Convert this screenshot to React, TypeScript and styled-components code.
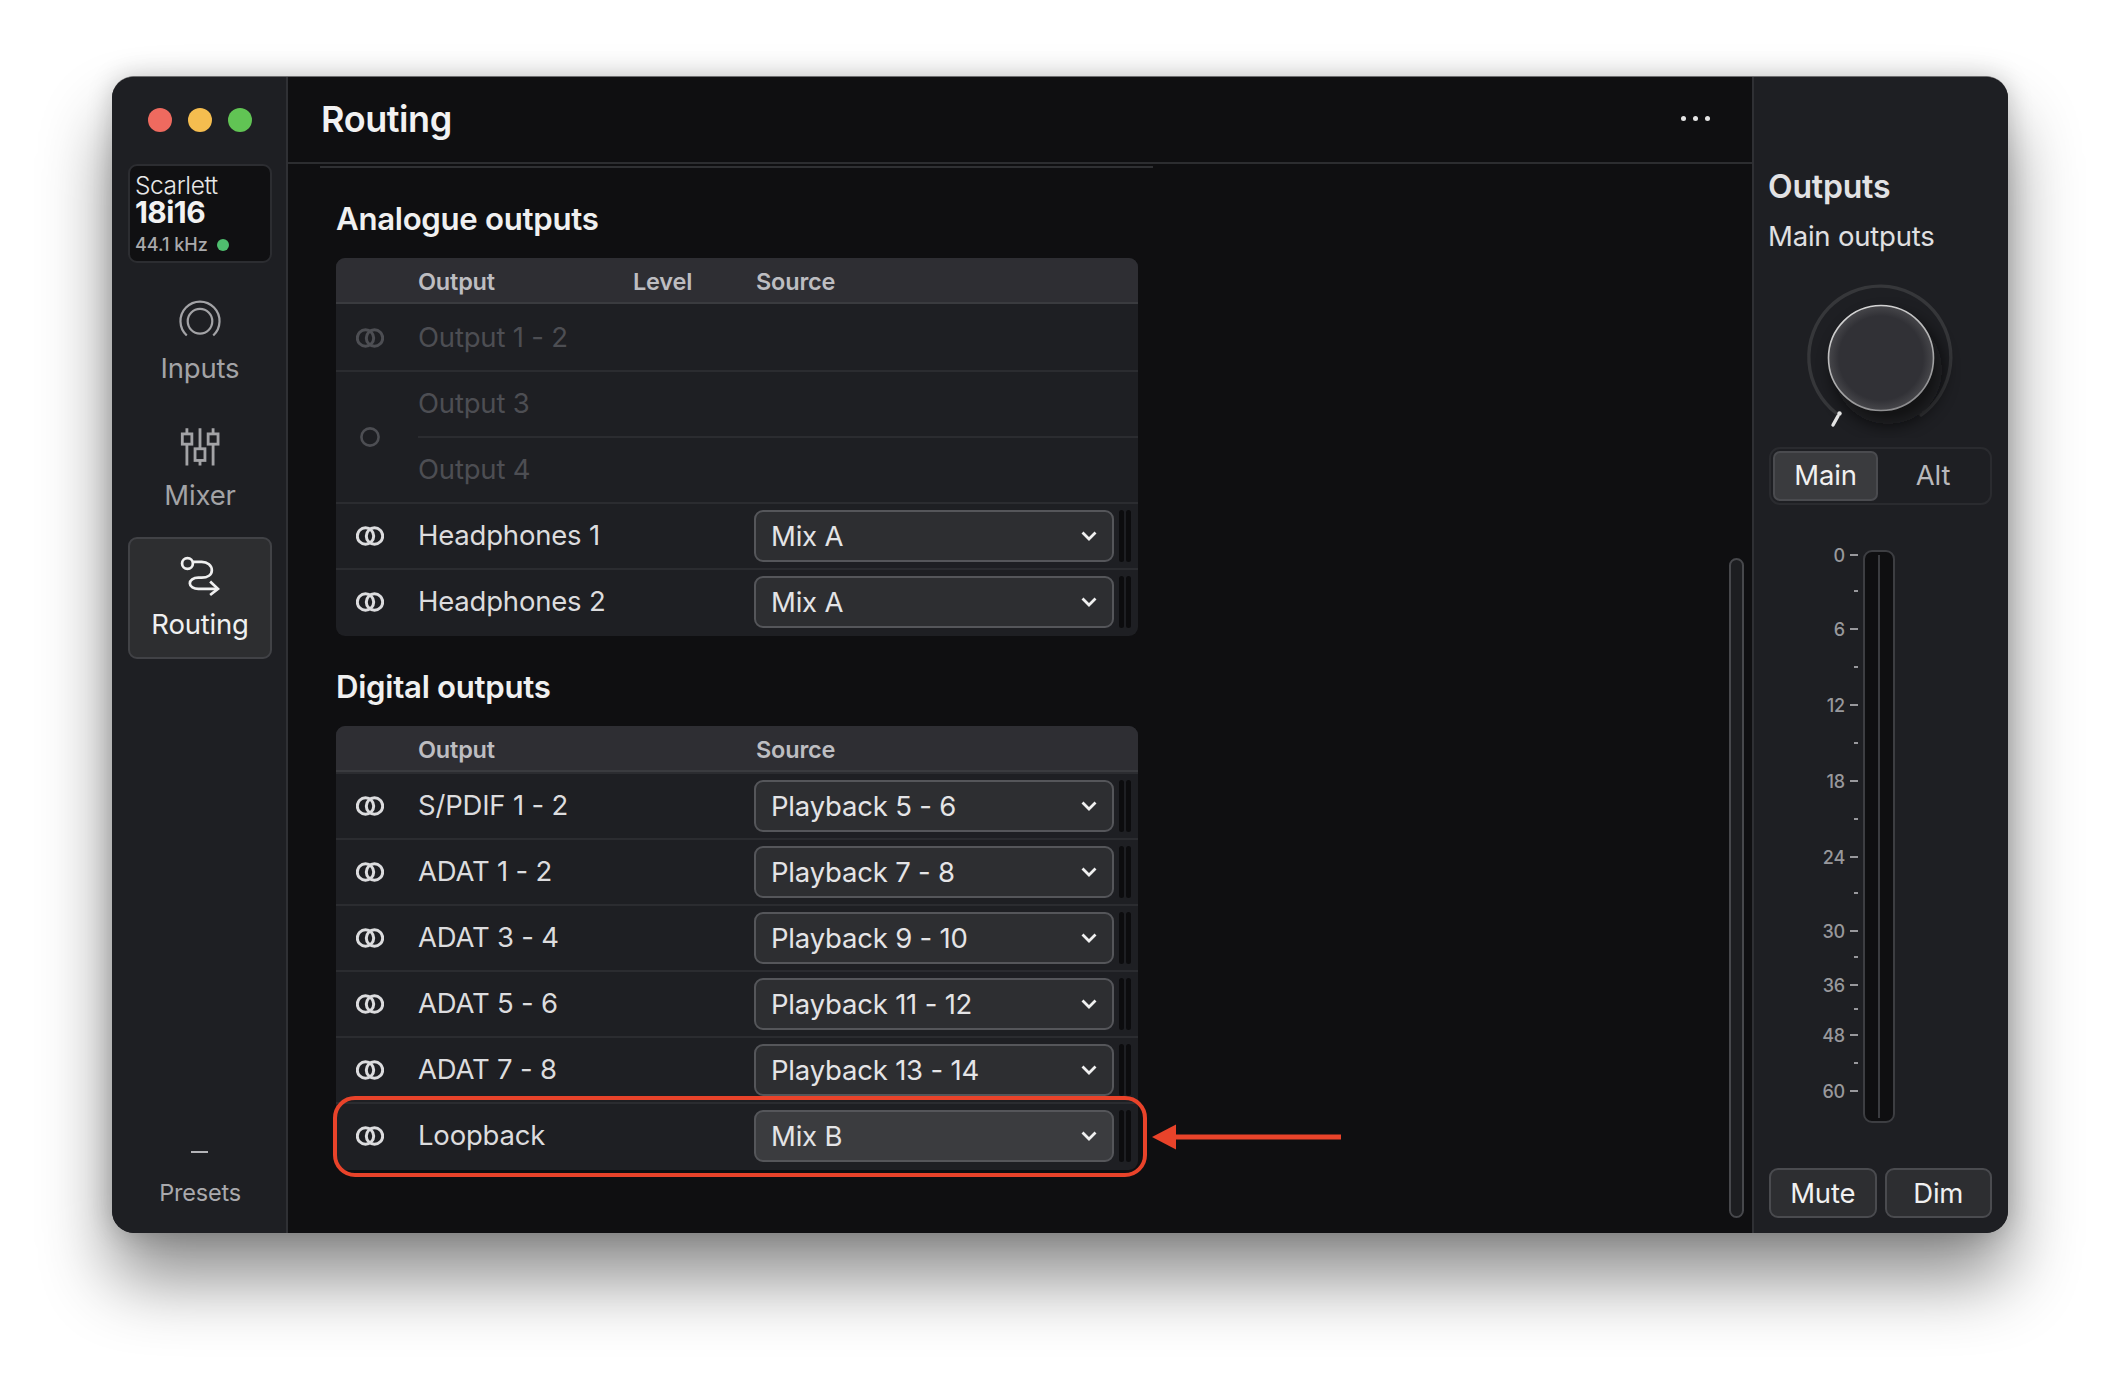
import React from 'react';
import styled, { createGlobalStyle } from 'styled-components';

const GlobalStyle = createGlobalStyle`
  html, body {
    margin: 0;
    padding: 0;
    background: #fff;
  }
  * {
    box-sizing: border-box;
  }
`;

const FONT = `Inter, "Noto Sans", sans-serif`;

const Page = styled.div`
  width: 2120px;
  height: 1382px;
  padding: 76px 112px 149px;
  overflow: hidden;
  font-family: ${FONT};
  letter-spacing: -0.2px;
`;

const Window = styled.div`
  display: flex;
  height: 100%;
  border-radius: 22px;
  overflow: hidden;
  background: #0f0f11;
  border-top: 1px solid #6e6e70;
`;

const Shadow = styled.div`
  height: 100%;
  border-radius: 22px;
  box-shadow: 0 46px 70px rgba(0, 0, 0, 0.45), 0 0 26px rgba(0, 0, 0, 0.2);
`;

const Sidebar = styled.aside`
  width: 176px;
  flex: none;
  display: flex;
  flex-direction: column;
  align-items: center;
  padding: 31px 0 0 2px;
  background: #1e1f23;
  border-right: 2px solid #2f3034;
`;

const Lights = styled.div`
  display: flex;
  gap: 16px;
`;

const Light = styled.span<{ $color: string }>`
  width: 24px;
  height: 24px;
  border-radius: 50%;
  background: ${({ $color }) => $color};
`;

const Device = styled.div`
  width: 144px;
  height: 99px;
  margin-top: 32px;
  padding: 6px 5px;
  border: 2px solid #2c2d31;
  border-radius: 9px;
  background: #101012;
  color: #e8e8e8;
`;

const DeviceName = styled.div`
  font-size: 24.5px;
  line-height: 27px;
  font-weight: 300;
  letter-spacing: -0.4px;
`;

const DeviceModel = styled.div`
  font-size: 30px;
  line-height: 27px;
  font-weight: 700;
  letter-spacing: -0.6px;
  color: #f2f2f2;
`;

const Rate = styled.div`
  display: flex;
  align-items: center;
  gap: 9px;
  margin-top: 8px;
  font-size: 18px;
  line-height: 22px;
  font-weight: 500;
  letter-spacing: 0;
  color: #a9a9ac;
`;

const RateDot = styled.span`
  width: 12px;
  height: 12px;
  border-radius: 50%;
  background: #4fbf6f;
`;

const Nav = styled.nav`
  display: flex;
  flex-direction: column;
  gap: 7px;
  margin-top: 16px;
`;

const NavItem = styled.div<{ $active?: boolean }>`
  width: 144px;
  height: 122px;
  padding-top: 14px;
  display: flex;
  flex-direction: column;
  align-items: center;
  border-radius: 9px;
  border: 2px solid ${({ $active }) => ($active ? '#414246' : 'transparent')};
  background: ${({ $active }) => ($active ? '#2d2e30' : 'transparent')};
  color: ${({ $active }) => ($active ? '#f0f0f0' : '#a3a3a6')};
`;

const NavIcon = styled.svg`
  width: 46px;
  height: 46px;
  fill: none;
  stroke: currentColor;
`;

const NavLabel = styled.div`
  margin-top: 7px;
  font-size: 27.5px;
  line-height: 36px;
  font-weight: 400;
`;

const Presets = styled.div`
  margin-top: auto;
  padding-bottom: 24px;
  display: flex;
  flex-direction: column;
  align-items: center;
  color: #a9a9ad;
`;

const PresetDash = styled.span`
  width: 17px;
  height: 2px;
  margin-bottom: 24px;
  background: #b4b4b8;
`;

const PresetLabel = styled.div`
  font-size: 23.5px;
  line-height: 32px;
`;

const Main = styled.main`
  flex: 1;
  min-width: 0;
  display: flex;
  flex-direction: column;
  position: relative;
`;

const Header = styled.header`
  height: 87px;
  flex: none;
  display: flex;
  align-items: center;
  justify-content: space-between;
  padding: 0 42px 2px 33px;
  border-bottom: 2px solid #2c2d30;
`;

const Title = styled.h1`
  margin: 0;
  font-size: 36px;
  font-weight: 600;
  color: #f2f2f2;
  letter-spacing: -0.4px;
`;

const More = styled.div`
  display: flex;
  gap: 7px;
`;

const MoreDot = styled.span`
  width: 5px;
  height: 5px;
  border-radius: 50%;
  background: #e4e4e4;
`;

const Content = styled.div`
  flex: 1;
  padding-left: 48px;
`;

const ScrolledLine = styled.div`
  width: 833px;
  height: 2px;
  margin: 2px 0 0 -16px;
  background: #2f3033;
`;

const SectionTitle = styled.h2`
  margin: 32px 0 0;
  height: 38px;
  font-size: 31.2px;
  line-height: 38px;
  font-weight: 600;
  color: #f0f0f0;
  letter-spacing: -0.3px;
`;

const Table = styled.div`
  width: 802px;
  margin-top: 20px;
  padding-bottom: 2px;
  border-radius: 9px;
  background: #1e1f23;
`;

const TableHead = styled.div`
  height: 46px;
  display: flex;
  align-items: center;
  padding: 2px 0 0 82px;
  border-radius: 9px 9px 0 0;
  background: #2e2e33;
  border-bottom: 2px solid #3a3b3f;
  font-size: 23.5px;
  font-weight: 600;
  color: #bdbdc1;
`;

const HeadCell = styled.div<{ $width: number }>`
  width: ${({ $width }) => $width}px;
`;

const Row = styled.div<{ $muted?: boolean; $first?: boolean }>`
  height: 66px;
  display: flex;
  align-items: center;
  position: relative;
  border-top: 2px solid ${({ $first }) => ($first ? 'transparent' : '#2b2c30')};
  color: ${({ $muted }) => ($muted ? '#4d4e53' : '#dcdcde')};
`;

const IconCell = styled.div`
  width: 82px;
  flex: none;
  display: flex;
  justify-content: center;
  padding-right: 14px;
`;

const RowName = styled.div`
  width: 336px;
  flex: none;
  padding-bottom: 2px;
  font-size: 27.5px;
  font-weight: 400;
`;

const Group = styled.div`
  display: flex;
  border-top: 2px solid #2b2c30;
  color: #4d4e53;
`;

const GroupIcon = styled(IconCell)`
  align-items: center;
`;

const GroupRows = styled.div`
  flex: 1;
`;

const GroupRow = styled.div<{ $split?: boolean }>`
  height: ${({ $split }) => ($split ? '66px' : '64px')};
  display: flex;
  align-items: center;
  border-top: ${({ $split }) => ($split ? '2px solid #2b2c30' : 'none')};
`;

const LinkIcon = styled.svg`
  width: 28px;
  height: 20px;
  fill: none;
  stroke: currentColor;
  stroke-width: 3;
`;

const MonoIcon = styled.svg`
  width: 20px;
  height: 20px;
  fill: none;
  stroke: currentColor;
  stroke-width: 2.6;
`;

const Select = styled.div<{ $hot?: boolean }>`
  width: 360px;
  height: 52px;
  flex: none;
  display: flex;
  align-items: center;
  justify-content: space-between;
  padding: 0 15px 1px;
  border: 2px solid #55565a;
  border-radius: 9px;
  background: ${({ $hot }) => ($hot ? '#3b3c3f' : '#2d2e31')};
  color: #e4e4e6;
  font-size: 27.5px;
`;

const Chevron = styled.svg`
  width: 16px;
  height: 10px;
  fill: none;
  stroke: #f0f0f0;
  stroke-width: 2.8;
`;

const LevelBars = styled.div`
  display: flex;
  gap: 2px;
  margin-left: 5px;
`;

const LevelBar = styled.span`
  width: 5px;
  height: 52px;
  border-radius: 3px;
  background: #0c0c0e;
`;

const Highlight = styled.div`
  position: absolute;
  left: -3px;
  top: -8px;
  width: 814px;
  height: 81px;
  border: 4.5px solid #e9432a;
  border-radius: 22px;
`;

const Annotation = styled.svg`
  position: absolute;
  left: 862px;
  top: 1046px;
  width: 192px;
  height: 28px;
`;

const ScrollBar = styled.div`
  position: absolute;
  right: 8px;
  top: 481px;
  width: 15px;
  height: 660px;
  border: 2px solid #47484c;
  border-radius: 8px;
  background: #1d1e21;
`;

const OutputsPanel = styled.aside`
  width: 256px;
  flex: none;
  display: flex;
  flex-direction: column;
  padding: 92px 16px 15px 15px;
  background: #1e1f23;
  border-left: 2px solid #2f3034;
`;

const PanelTitle = styled.div`
  margin-left: -1px;
  font-size: 32px;
  line-height: 36px;
  font-weight: 600;
  color: #e2e2e4;
`;

const PanelSub = styled.div`
  margin: 13px 0 0 -1px;
  font-size: 27.5px;
  line-height: 36px;
  color: #e0e0e2;
`;

const Knob = styled.svg`
  display: block;
  width: 160px;
  height: 160px;
  margin: 24px auto 0;
`;

const Toggle = styled.div`
  height: 58px;
  margin-top: 9px;
  display: flex;
  padding: 2px;
  border: 2px solid #2a2b2f;
  border-radius: 11px;
`;

const ToggleItem = styled.div<{ $active?: boolean }>`
  flex: 1;
  display: flex;
  align-items: center;
  justify-content: center;
  padding-bottom: 2px;
  border-radius: 7px;
  font-size: 27.5px;
  border: 2px solid ${({ $active }) => ($active ? '#4a4b4f' : 'transparent')};
  background: ${({ $active }) => ($active ? '#3a3b3e' : 'transparent')};
  color: ${({ $active }) => ($active ? '#f0f0f0' : '#b8b8bb')};
  max-width: ${({ $active }) => ($active ? '105px' : 'none')};
`;

const MeterArea = styled.div`
  margin-top: 45px;
  height: 573px;
  display: flex;
`;

const Scale = styled.div`
  margin: 5px 5px 0 0;
  width: 89px;
`;

const ScaleRow = styled.div<{ $h: number }>`
  height: ${({ $h }) => $h}px;
  display: flex;
  justify-content: flex-end;
  align-items: flex-start;
  gap: 5px;
`;

const ScaleLabel = styled.span`
  margin-top: -9px;
  font-size: 18px;
  line-height: 20px;
  font-weight: 500;
  color: #98989c;
`;

const ScaleMark = styled.span<{ $major: boolean }>`
  width: ${({ $major }) => ($major ? '8px' : '4px')};
  height: 2px;
  margin-top: -1px;
  background: #98989c;
`;

const Meter = styled.div`
  width: 32px;
  height: 573px;
  display: flex;
  justify-content: center;
  padding: 3px 0;
  border: 2px solid #3d3e42;
  border-radius: 9px;
  background: #0f0f11;
`;

const MeterLine = styled.span`
  width: 2px;
  background: #3b3c40;
`;

const Buttons = styled.div`
  display: flex;
  gap: 8px;
  margin-top: auto;
`;

const PanelButton = styled.div`
  flex: 1;
  height: 50px;
  display: flex;
  align-items: center;
  justify-content: center;
  border: 2px solid #4a4b4f;
  border-radius: 9px;
  background: #2d2e31;
  color: #f0f0f0;
  font-size: 27.5px;
`;

const TICKS: { y: number; label?: string }[] = [
  { y: 555, label: '0' },
  { y: 591 },
  { y: 629, label: '6' },
  { y: 667 },
  { y: 705, label: '12' },
  { y: 743 },
  { y: 781, label: '18' },
  { y: 819 },
  { y: 857, label: '24' },
  { y: 893 },
  { y: 931, label: '30' },
  { y: 957 },
  { y: 985, label: '36' },
  { y: 1009 },
  { y: 1035, label: '48' },
  { y: 1063 },
  { y: 1091, label: '60' },
];

const Link = () => (
  <LinkIcon viewBox="0 0 28 20">
    <circle cx="9.5" cy="10" r="8.2" />
    <circle cx="18.5" cy="10" r="8.2" />
  </LinkIcon>
);

const Down = () => (
  <Chevron viewBox="0 0 16 10">
    <path d="M1.5 1.5 8 8l6.5-6.5" />
  </Chevron>
);

const Output = ({ name, source, hot }: { name: string; source: string; hot?: boolean }) => (
  <Row>
    <IconCell>
      <Link />
    </IconCell>
    <RowName>{name}</RowName>
    <Select $hot={hot}>
      {source}
      <Down />
    </Select>
    <LevelBars>
      <LevelBar />
      <LevelBar />
    </LevelBars>
    {hot && <Highlight />}
  </Row>
);

export default function App() {
  return (
    <Page>
      <GlobalStyle />
      <Shadow>
        <Window>
          <Sidebar>
            <Lights>
              <Light $color="#ee6a5f" />
              <Light $color="#f5bd4f" />
              <Light $color="#61c454" />
            </Lights>
            <Device>
              <DeviceName>Scarlett</DeviceName>
              <DeviceModel>18i16</DeviceModel>
              <Rate>
                44.1 kHz
                <RateDot />
              </Rate>
            </Device>
            <Nav>
              <NavItem>
                <NavIcon viewBox="227 708 146 146" strokeWidth="7" style={{ marginTop: 2 }}>
                  <path d="M258 830A62 62 0 1 1 342 830" />
                  <circle cx="300" cy="785" r="39" />
                </NavIcon>
                <NavLabel>Inputs</NavLabel>
              </NavItem>
              <NavItem>
                <NavIcon viewBox="235 140 130 130" strokeWidth="8">
                  <path d="M263 152v16M263 197v60M300 152v56M300 243v14M337 152v16M337 197v60" />
                  <rect x="250" y="168" width="27" height="29" />
                  <rect x="286" y="210" width="28" height="33" />
                  <rect x="323" y="168" width="28" height="29" />
                </NavIcon>
                <NavLabel>Mixer</NavLabel>
              </NavItem>
              <NavItem $active>
                <NavIcon viewBox="232 522 136 130" strokeWidth="8">
                  <circle cx="263" cy="550" r="16" />
                  <path d="M280 545h25c17 0 30 11 30 25s-13 22-30 22h-10c-15 0-25 8-25 17s12 16 25 16h55" />
                  <path d="M330 603l23 22-23 18" />
                </NavIcon>
                <NavLabel>Routing</NavLabel>
              </NavItem>
            </Nav>
            <Presets>
              <PresetDash />
              <PresetLabel>Presets</PresetLabel>
            </Presets>
          </Sidebar>

          <Main>
            <Header>
              <Title>Routing</Title>
              <More>
                <MoreDot />
                <MoreDot />
                <MoreDot />
              </More>
            </Header>
            <Content>
              <ScrolledLine />
              <SectionTitle>Analogue outputs</SectionTitle>
              <Table>
                <TableHead>
                  <HeadCell $width={215}>Output</HeadCell>
                  <HeadCell $width={123}>Level</HeadCell>
                  <HeadCell $width={120}>Source</HeadCell>
                </TableHead>
                <Row $muted $first>
                  <IconCell>
                    <Link />
                  </IconCell>
                  <RowName>Output 1 - 2</RowName>
                </Row>
                <Group>
                  <GroupIcon>
                    <MonoIcon viewBox="0 0 20 20">
                      <circle cx="10" cy="10" r="8.6" />
                    </MonoIcon>
                  </GroupIcon>
                  <GroupRows>
                    <GroupRow>
                      <RowName>Output 3</RowName>
                    </GroupRow>
                    <GroupRow $split>
                      <RowName>Output 4</RowName>
                    </GroupRow>
                  </GroupRows>
                </Group>
                <Output name="Headphones 1" source="Mix A" />
                <Output name="Headphones 2" source="Mix A" />
              </Table>

              <SectionTitle>Digital outputs</SectionTitle>
              <Table>
                <TableHead>
                  <HeadCell $width={338}>Output</HeadCell>
                  <HeadCell $width={120}>Source</HeadCell>
                </TableHead>
                <Output name="S/PDIF 1 - 2" source="Playback 5 - 6" />
                <Output name="ADAT 1 - 2" source="Playback 7 - 8" />
                <Output name="ADAT 3 - 4" source="Playback 9 - 10" />
                <Output name="ADAT 5 - 6" source="Playback 11 - 12" />
                <Output name="ADAT 7 - 8" source="Playback 13 - 14" />
                <Output name="Loopback" source="Mix B" hot />
              </Table>
            </Content>
            <Annotation viewBox="0 0 192 28">
              <path d="M2 14 26 1.5v25z" fill="#e9432a" />
              <path d="M24 14h167" stroke="#e9432a" strokeWidth="5" />
            </Annotation>
            <ScrollBar />
          </Main>

          <OutputsPanel>
            <PanelTitle>Outputs</PanelTitle>
            <PanelSub>Main outputs</PanelSub>
            <Knob viewBox="0 0 160 160">
              <defs>
                <radialGradient id="knobFace" cx="50%" cy="50%" r="50%">
                  <stop offset="80%" stopColor="#313136" />
                  <stop offset="100%" stopColor="#46464a" />
                </radialGradient>
                <linearGradient id="knobEdge" x1="0.3" y1="0" x2="0.7" y2="1">
                  <stop offset="0%" stopColor="#d8d8d8" />
                  <stop offset="100%" stopColor="#8a8a8c" />
                </linearGradient>
                <filter id="knobShadow" x="-40%" y="-40%" width="180%" height="180%">
                  <feGaussianBlur stdDeviation="9" />
                </filter>
              </defs>
              <path
                d="M35 135A71 71 0 1 1 120 137"
                fill="none"
                stroke="#36373a"
                strokeWidth="3.4"
                strokeLinecap="round"
              />
              <circle cx="87" cy="92" r="54" fill="#0d0d0f" opacity="0.75" filter="url(#knobShadow)" />
              <circle cx="80" cy="80" r="52.5" fill="url(#knobFace)" stroke="url(#knobEdge)" strokeWidth="1.6" />
              <path d="M32 147l5-9" stroke="#e4e4e4" strokeWidth="3.4" strokeLinecap="round" />
              <circle cx="38.5" cy="135.5" r="2.2" fill="#e4e4e4" />
            </Knob>
            <Toggle>
              <ToggleItem $active>Main</ToggleItem>
              <ToggleItem>Alt</ToggleItem>
            </Toggle>
            <MeterArea>
              <Scale>
                {TICKS.map((tick, i) => (
                  <ScaleRow key={tick.y} $h={(TICKS[i + 1]?.y ?? tick.y + 20) - tick.y}>
                    {tick.label && <ScaleLabel>{tick.label}</ScaleLabel>}
                    <ScaleMark $major={Boolean(tick.label)} />
                  </ScaleRow>
                ))}
              </Scale>
              <Meter>
                <MeterLine />
              </Meter>
            </MeterArea>
            <Buttons>
              <PanelButton>Mute</PanelButton>
              <PanelButton>Dim</PanelButton>
            </Buttons>
          </OutputsPanel>
        </Window>
      </Shadow>
    </Page>
  );
}
